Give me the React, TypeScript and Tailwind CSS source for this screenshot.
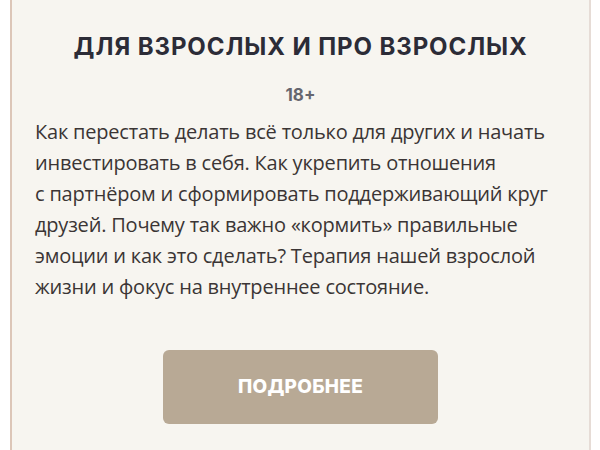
import React from "react";

export default function App() {
  const lines = [
    "Как перестать делать всё только для других и начать",
    "инвестировать в себя. Как укрепить отношения",
    "с партнёром и сформировать поддерживающий круг",
    "друзей. Почему так важно «кормить» правильные",
    "эмоции и как это сделать? Терапия нашей взрослой",
    "жизни и фокус на внутреннее состояние.",
  ];
  return (
    <div className="w-[600px] h-[450px] bg-white overflow-hidden">
      <div className="ml-[10px] w-[581px] h-[450px] bg-[#f7f5f0] border-l-2 border-r-2 border-l-[#dcc6b8] border-r-[#e6dcd6] flex flex-col items-center">
        <h2 className="mt-[33px] text-[24px] leading-[28px] font-bold text-[#2c2c37] tracking-[0.9px] font-[Inter,'Open_Sans',sans-serif]">
          ДЛЯ ВЗРОСЛЫХ И ПРО ВЗРОСЛЫХ
        </h2>
        <div className="mt-[24px] text-[17px] leading-[20px] font-bold text-[#66666e] font-[Inter,'Open_Sans',sans-serif]">
          18+
        </div>
        <div className="mt-[11px] self-stretch pl-[23px] text-[20px] leading-[31px] text-[#3b3535] tracking-[-0.2px] font-['Open_Sans',sans-serif]">
          {lines.map((l, i) => (
            <div key={i} className="whitespace-nowrap">{l}</div>
          ))}
        </div>
        <button className="mt-[48px] w-[275px] h-[74px] rounded-[6px] bg-[#b8a995] text-white text-[19px] font-extrabold tracking-[0.3px] font-[Inter,'Open_Sans',sans-serif]">
          ПОДРОБНЕЕ
        </button>
      </div>
    </div>
  );
}
